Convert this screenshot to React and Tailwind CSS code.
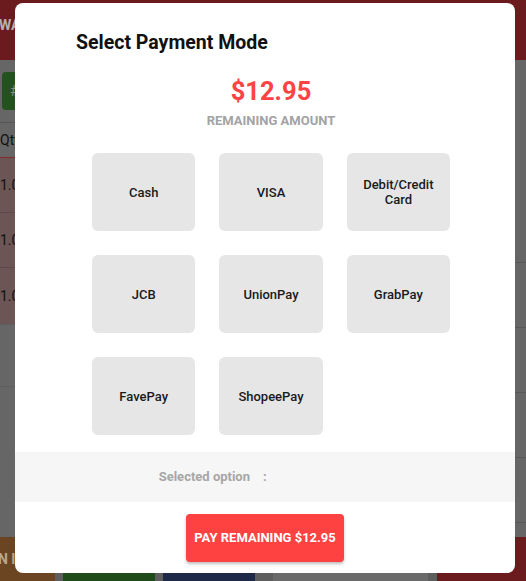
import React from 'react';

const METHODS = ['Cash', 'VISA', 'Debit/Credit Card', 'JCB', 'UnionPay', 'GrabPay', 'FavePay', 'ShopeePay'];

const ITEMS = [
  { qty: '1.0', h: 'h-[55px]', line: 'border-[#8a2b2b]' },
  { qty: '1.0', h: 'h-[55px]', line: 'border-[#5a4a4a]' },
  { qty: '1.0', h: 'h-[57px]', line: 'border-[#5a4a4a]' },
];

function BackgroundApp() {
  return (
    <div className="flex h-full flex-col">
      {/* header */}
      <header className="flex h-[60px] shrink-0 items-center bg-[#6b1b1d] pb-[10px] text-[14px] font-bold text-[#bcaeae]">
        <span className="-ml-[1px]">WALK-IN</span>
      </header>

      <div className="flex min-h-0 flex-1">
        {/* order panel */}
        <section className="flex flex-1 flex-col">
          <div className="flex h-[62px] shrink-0 items-center pl-[2px]">
            <div className="flex h-[38px] w-[120px] items-center rounded-[4px] bg-[#24521f] pl-[8px] text-[14px] text-[#8c8c8c]">#</div>
          </div>
          <div className="flex h-[35px] shrink-0 items-center border-t border-[#555] text-[14px] text-[#111]">Qty</div>
          <div className="shrink-0 bg-[#6b5555]">
            {ITEMS.map((it, i) => (
              <div key={i} className={`flex ${it.h} items-center border-t ${it.line} text-[14px] text-[#111]`}>
                {it.qty}
              </div>
            ))}
          </div>
          <div className="h-[62px] shrink-0 border-t border-[#5e5e5e]" />
          <div className="flex-1 border-t border-[#5e5e5e]" />
        </section>

        {/* menu panel */}
        <aside className="flex w-[200px] flex-col">
          <div className="h-[202px] shrink-0" />
          {[0, 1, 2, 3].map((i) => (
            <div key={i} className="h-[65px] shrink-0 border-t border-[#585858]" />
          ))}
          <div className="flex-1 border-t border-[#585858]" />
        </aside>
      </div>

      {/* footer actions */}
      <footer className="flex h-[44px] shrink-0 gap-[8px] bg-[#5e5e5e] text-[14px] font-bold text-[#b9a88f]">
        <div className="flex w-[55px] items-center bg-[#6b4521]">
          <span className="-ml-[2px] whitespace-nowrap">N II</span>
        </div>
        <div className="w-[92px] bg-[#1f4a1a]" />
        <div className="w-[92px] bg-[#1e2a47]" />
        <div className="ml-[10px] w-[155px] bg-[#6a6a6a]" />
        <div className="ml-[1px] flex-1 bg-[#6b1b1d]" />
      </footer>
    </div>
  );
}

function PaymentModal() {
  return (
    <div className="absolute left-[15px] top-[3px] flex h-[570px] w-[500px] flex-col rounded-[8px] bg-white">
      <h2 className="pl-[61px] pt-[28px] text-[19.5px] font-bold leading-[24px] text-[#111]">Select Payment Mode</h2>

      <div className="ml-[77px] w-[358px]">
        <div className="mt-[20px] text-center text-[25.5px] font-bold leading-[32px] text-[#fd4343]">$12.95</div>
        <div className="mt-[6px] text-center text-[13px] font-bold leading-[16px] text-[#a3a3a3]">REMAINING AMOUNT</div>

        <div className="mt-[24px] grid grid-cols-3 gap-x-[24px] gap-y-[24px]">
          {METHODS.map((m) => (
            <button
              key={m}
              className="flex h-[78px] items-center justify-center rounded-[6px] bg-[#e6e6e6] px-[12px] text-center text-[13px] font-medium leading-[15px] text-[#1a1a1a]"
            >
              {m}
            </button>
          ))}
        </div>
      </div>

      <div className="mt-[17px] flex h-[50px] items-center bg-[#f6f6f6] text-[13px] font-bold text-[#a6a6a6]">
        <span className="w-[235px] text-right">Selected option</span>
        <span className="ml-[13px]">:</span>
      </div>

      <div className="mt-[12px] flex justify-center">
        <button className="h-[48px] w-[158px] rounded-[4px] bg-[#fe4141] text-[13px] font-bold text-white shadow-[0_2px_3px_rgba(0,0,0,0.25)]">
          PAY REMAINING $12.95
        </button>
      </div>
    </div>
  );
}

export default function App() {
  return (
    <div className="relative h-[581px] w-[526px] overflow-hidden bg-[#666] font-['Roboto','Liberation_Sans',sans-serif]">
      <BackgroundApp />
      <PaymentModal />
    </div>
  );
}
